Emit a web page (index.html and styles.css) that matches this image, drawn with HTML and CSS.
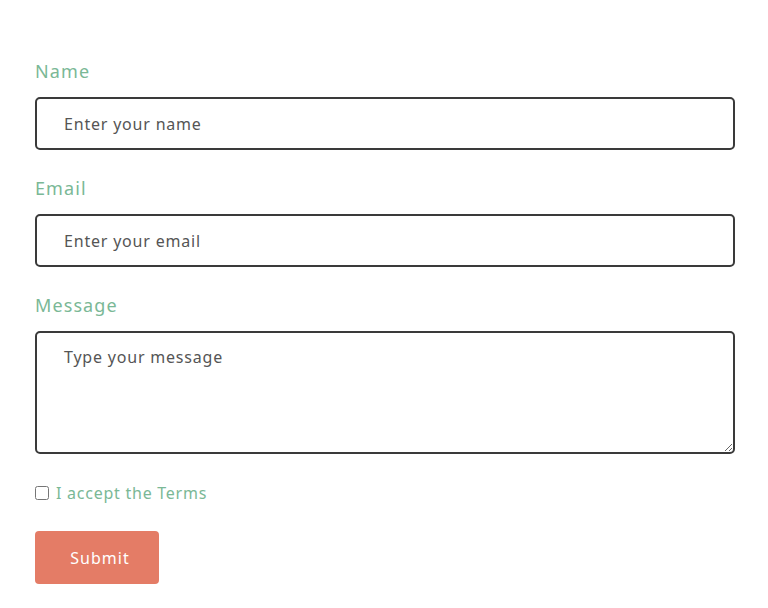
FILE: index.html
```html
<!DOCTYPE html>
<html lang="en">
<head>
<meta charset="utf-8">
<title>Contact form</title>
<link rel="stylesheet" href="styles.css">
</head>
<body>
<form class="form">
  <div class="group">
    <label class="label" for="name">Name</label>
    <input class="field" id="name" type="text" placeholder="Enter your name">
  </div>
  <div class="group">
    <label class="label" for="email">Email</label>
    <input class="field" id="email" type="email" placeholder="Enter your email">
  </div>
  <div class="group">
    <label class="label" for="message">Message</label>
    <textarea class="field area" id="message" placeholder="Type your message"></textarea>
  </div>
  <div class="terms">
    <input class="check" id="terms" type="checkbox">
    <label class="terms-label" for="terms">I accept the Terms</label>
  </div>
  <button class="submit" type="button">Submit</button>
</form>
</body>
</html>
```

FILE: styles.css
```css
* { box-sizing: border-box; }
body {
  margin: 0;
  background: #ffffff;
  font-family: "Noto Sans", "Open Sans", sans-serif;
}
.form {
  width: 700px;
  margin-left: 35px;
  padding-top: 60px;
  display: flex;
  flex-direction: column;
}
.group {
  display: flex;
  flex-direction: column;
  margin-bottom: 27px;
}
.group:nth-child(3) { margin-bottom: 29px; }
.label {
  font-size: 18px;
  line-height: 22px;
  letter-spacing: 1.1px;
  color: #7ab896;
  margin-bottom: 15px;
}
.field {
  width: 700px;
  height: 53px;
  border: 2px solid #3a3a3a;
  border-radius: 5px;
  padding: 0 27px;
  font-family: inherit;
  font-size: 16px;
  letter-spacing: 0.8px;
  color: #333;
  background: #fff;
  outline: none;
}
.field::placeholder { color: #555555; }
.area {
  height: 123px;
  padding: 13px 27px;
  line-height: 22px;
  resize: vertical;
}
.terms {
  display: flex;
  align-items: center;
  height: 20px;
  margin-bottom: 28px;
}
.check {
  margin: 0 7px 0 0;
  width: 14px;
  height: 14px;
}
.terms-label {
  font-size: 16px;
  letter-spacing: 0.75px;
  color: #7ab896;
}
.submit {
  width: 124px;
  height: 53px;
  border: none;
  border-radius: 4px;
  background: #e47c66;
  color: #ffffff;
  font-family: inherit;
  font-size: 16px;
  letter-spacing: 1px;
  padding: 0 0 0 6px;
  cursor: pointer;
}
```
